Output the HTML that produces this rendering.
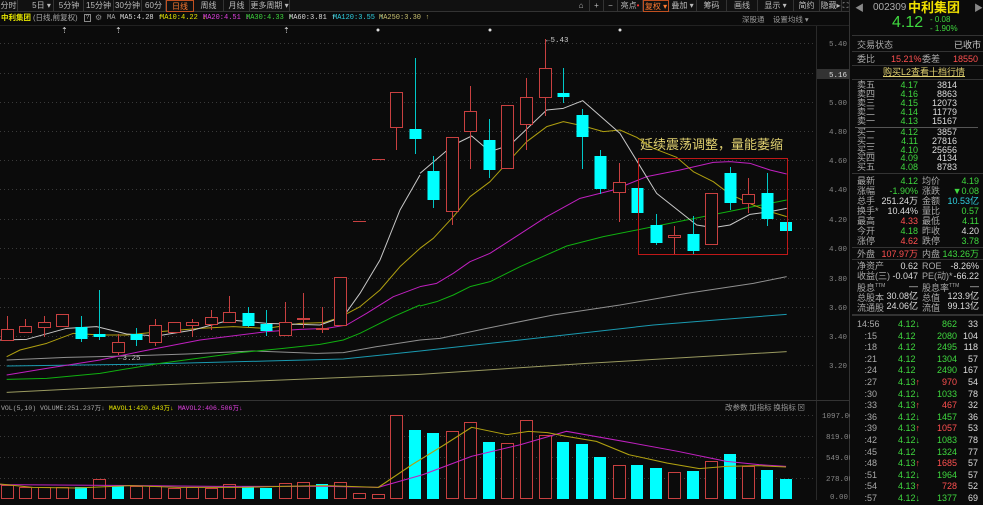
<!DOCTYPE html>
<html><head><meta charset="utf-8"><style>
*{margin:0;padding:0;box-sizing:border-box}
body{width:983px;height:500px;background:#0b0b0b;overflow:hidden;position:relative;font-family:"Liberation Sans","Noto Sans CJK SC",sans-serif;font-size:9px;color:#c8c8c8}
.a{position:absolute;white-space:nowrap;line-height:10px}
.tb{position:absolute;top:0;height:12px;line-height:12px;text-align:center;color:#bbb;border-right:1px solid #333;font-size:8px;overflow:hidden}
.r{text-align:right}
.g{color:#3fd83f}.rd{color:#ff5050}.y{color:#e6e600}.cy{color:#2fd0e0}.w{color:#ddd}
.ma{position:absolute;top:14px;font-family:"Liberation Mono",monospace;font-size:7px;line-height:9px;white-space:nowrap}
</style></head><body>
<!-- top toolbar -->
<div class="a" style="left:0;top:0;width:850px;height:12px;background:#111;border-bottom:1px solid #333"></div>
<div class="tb" style="left:0;width:18px">分时</div>
<div class="tb" style="left:30px;width:24px">5日 ▾</div>
<div class="tb" style="left:55px;width:29px">5分钟</div>
<div class="tb" style="left:84px;width:30px">15分钟</div>
<div class="tb" style="left:114px;width:28px">30分钟</div>
<div class="tb" style="left:142px;width:24px">60分钟</div>
<div class="tb" style="left:166px;width:28px;color:#ff7a30;border:1px solid #c05020">日线</div>
<div class="tb" style="left:194px;width:30px">周线</div>
<div class="tb" style="left:224px;width:26px">月线</div>
<div class="tb" style="left:250px;width:40px">更多周期 ▾</div>
<div class="tb" style="left:573px;width:17px">⌂</div>
<div class="tb" style="left:590px;width:14px">+</div>
<div class="tb" style="left:604px;width:14px">−</div>
<div class="tb" style="left:618px;width:25px">亮点<span style="color:#f33">•</span></div>
<div class="tb" style="left:643px;width:26px;color:#ff7a30;border:1px solid #c05020">复权 ▾</div>
<div class="tb" style="left:669px;width:28px">叠加 ▾</div>
<div class="tb" style="left:697px;width:30px">筹码</div>
<div class="tb" style="left:727px;width:31px">画线</div>
<div class="tb" style="left:758px;width:36px">显示 ▾</div>
<div class="tb" style="left:794px;width:26px">简约</div>
<div class="tb" style="left:820px;width:22px">隐藏▸</div>
<div class="tb" style="left:842px;width:8px">⛶</div>
<!-- title row -->
<div class="a" style="left:1px;top:13px;font-size:7.5px;color:#e6e600;font-weight:bold">中利集团</div>
<div class="a" style="left:33px;top:13px;font-size:7.5px;color:#aaa">(日线,前复权)</div>
<div class="a" style="left:84px;top:14px;width:7px;height:8px;border:1px solid #888;font-size:6px;line-height:6px;text-align:center;color:#aaa">?</div>
<div class="a" style="left:95px;top:13px;font-size:8px;color:#888">⚙</div>
<div class="ma" style="left:107px;color:#aaa">MA</div>
<div class="ma w" style="left:120px">MA5:4.28 ↑</div>
<div class="ma y" style="left:160px">MA10:4.22 ↓</div>
<div class="ma" style="left:203px;color:#e040e0">MA20:4.51 ↓</div>
<div class="ma g" style="left:246px">MA30:4.33 ↑</div>
<div class="ma w" style="left:289px">MA60:3.81 ↑</div>
<div class="ma cy" style="left:333px">MA120:3.55 ↑</div>
<div class="ma" style="left:379px;color:#c8c070">MA250:3.30 ↑</div>
<div class="a" style="left:742px;top:15px;color:#999;font-size:7.5px">深股通 &nbsp;&nbsp; 设置均线 ▾</div>
<div class="a" style="left:0;top:25px;width:850px;height:1px;background:#222"></div>
<!-- chart -->
<svg class="a" style="left:0;top:0" width="850" height="500">
<g stroke="#3a3a3a" stroke-dasharray="1,3" stroke-width="1">
<line x1="0" x2="816" y1="43.5" y2="43.5"/><line x1="0" x2="816" y1="73.5" y2="73.5"/><line x1="0" x2="816" y1="102.5" y2="102.5"/><line x1="0" x2="816" y1="131.5" y2="131.5"/><line x1="0" x2="816" y1="160.5" y2="160.5"/><line x1="0" x2="816" y1="189.5" y2="189.5"/><line x1="0" x2="816" y1="219.5" y2="219.5"/><line x1="0" x2="816" y1="248.5" y2="248.5"/><line x1="0" x2="816" y1="278.5" y2="278.5"/><line x1="0" x2="816" y1="307.5" y2="307.5"/><line x1="0" x2="816" y1="336.5" y2="336.5"/><line x1="0" x2="816" y1="365.5" y2="365.5"/>
<line x1="0" x2="816" y1="415.5" y2="415.5"/><line x1="0" x2="816" y1="436.5" y2="436.5"/><line x1="0" x2="816" y1="457.5" y2="457.5"/><line x1="0" x2="816" y1="478.5" y2="478.5"/>
</g>
<line x1="816.5" y1="26" x2="816.5" y2="500" stroke="#2a2a2a"/>
<line x1="0" y1="400.5" x2="850" y2="400.5" stroke="#333"/>
<line x1="849.5" y1="0" x2="849.5" y2="500" stroke="#333"/>
<g fill="#ddd" font-size="8" font-family="Liberation Sans">
<text x="61" y="33">⇡</text><text x="115" y="33">⇡</text><text x="283" y="33">⇡</text><circle cx="378" cy="30" r="1.5"/><circle cx="490" cy="30" r="1.5"/><circle cx="620" cy="30" r="1.5"/>
</g>
<g fill="#888" font-size="7.5" font-family="Liberation Mono">
<text x="829" y="46">5.40</text><text x="829" y="105">5.00</text><text x="829" y="134">4.80</text><text x="829" y="163">4.60</text><text x="829" y="192">4.40</text><text x="829" y="222">4.20</text><text x="829" y="251">4.00</text><text x="829" y="281">3.80</text><text x="829" y="310">3.60</text><text x="829" y="339">3.40</text><text x="829" y="368">3.20</text>
<text x="822" y="418">1097.00</text><text x="826" y="439">819.00</text><text x="826" y="460">549.00</text><text x="826" y="481">278.00</text><text x="830" y="499">0.00</text>
</g>
<rect x="817" y="69" width="32" height="10" fill="#333"/><text x="829" y="77" fill="#ddd" font-size="7.5" font-family="Liberation Mono">5.16</text>
<text x="546" y="42" fill="#ccc" font-size="7.5" font-family="Liberation Mono">←5.43</text>
<text x="118" y="360" fill="#ccc" font-size="7.5" font-family="Liberation Mono">←3.25</text>
<g fill="none" stroke-width="3" stroke-linejoin="round">
<g transform="translate(0,30) scale(0.33333)">
<polyline stroke="#9a9a60" points="20,1087 400,1068 800,1052 1260,1033"/>
<polyline stroke="#1a9ab0" points="20,1008 400,1003 800,993 1030,987 1260,963"/>
<polyline stroke="#909090" points="20,990 200,982 380,978 560,972 760,963 950,970 1030,968 1130,950 1260,930"/>
<polyline stroke="#10b010" points="20,1048 140,1045 300,1030 480,1000 720,968 850,955 960,943 1030,930 1080,910 1180,860 1260,825"/>
<polyline stroke="#c020c0" points="20,1035 140,1015 300,990 420,965 600,930 800,905 900,898 980,895 1040,885 1100,850 1180,800 1260,770"/>
<polyline stroke="#b0a010" points="20,980 60,960 140,940 220,910 300,915 380,915 480,905 600,895 700,890 800,895 900,880 970,878 1020,862 1080,830 1140,780 1200,710 1260,655"/>
<polyline stroke="#c8c8c8" points="0,930 80,928 200,895 290,890 380,912 470,918 580,900 690,870 800,880 960,885 1030,860 1080,790 1140,690 1200,540 1260,435"/>
</g>
<g transform="translate(420,30) scale(0.33333)">
<polyline stroke="#9a9a60" points="0,1033 500,1000 1100,965"/>
<polyline stroke="#1a9ab0" points="0,963 300,930 700,885 1100,853"/>
<polyline stroke="#909090" points="0,930 60,925 200,895 400,855 600,825 800,790 1000,760 1100,740"/>
<polyline stroke="#10b010" points="0,828 50,815 100,795 150,770 210,755 300,710 440,648 550,620 700,590 850,560 1000,530 1100,510"/>
<polyline stroke="#c020c0" points="0,770 50,760 100,730 150,695 210,670 280,625 380,560 480,505 580,480 680,440 780,420 880,397 930,395 990,400 1050,420 1100,432"/>
<polyline stroke="#b0a010" points="0,655 40,625 100,560 150,500 210,455 260,400 320,335 380,290 430,275 490,288 550,305 600,300 650,322 700,355 770,382 820,425 880,455 930,493 1000,525 1050,545 1100,560"/>
<polyline stroke="#c8c8c8" points="0,430 100,345 155,318 210,365 270,345 380,240 430,235 488,212 600,310 710,490 830,585 880,593 930,585 990,553 1050,545 1100,535"/>
</g>
</g>
<g stroke="#c84040" fill="#0b0b0b" stroke-width="1">
<line x1="7.5" y1="316" x2="7.5" y2="341"/><rect x="1.5" y="329.5" width="12" height="11"/>
<line x1="25.5" y1="319" x2="25.5" y2="333"/><rect x="19.5" y="326.5" width="12" height="6"/>
<line x1="44.5" y1="316" x2="44.5" y2="337"/><rect x="38.5" y="322.5" width="12" height="5"/>
<rect x="56.5" y="314.5" width="12" height="12"/>
<line x1="118.5" y1="334" x2="118.5" y2="355"/><rect x="112.5" y="342.5" width="12" height="10"/>
<line x1="155.5" y1="319" x2="155.5" y2="346"/><rect x="149.5" y="325.5" width="12" height="17"/>
<rect x="168.5" y="322.5" width="12" height="10"/>
<line x1="192.5" y1="319" x2="192.5" y2="337"/><rect x="186.5" y="322.5" width="12" height="3"/>
<line x1="211.5" y1="310" x2="211.5" y2="330"/><rect x="205.5" y="317.5" width="12" height="7"/>
<line x1="229.5" y1="296" x2="229.5" y2="322"/><rect x="223.5" y="312.5" width="12" height="10"/>
<line x1="285.5" y1="302" x2="285.5" y2="335"/><rect x="279.5" y="322.5" width="12" height="13"/>
<line x1="303.5" y1="293" x2="303.5" y2="328"/><rect x="297.5" y="318.5" width="12" height="1"/>
<line x1="322.5" y1="307" x2="322.5" y2="333"/><rect x="316.5" y="328.5" width="12" height="1"/>
<rect x="334.5" y="277.5" width="12" height="48"/>
<line x1="353" y1="221.5" x2="366" y2="221.5"/>
<line x1="372" y1="159.5" x2="385" y2="159.5"/>
<line x1="396.5" y1="127" x2="396.5" y2="150"/><rect x="390.5" y="92.5" width="12" height="35"/>
<line x1="452.5" y1="137" x2="452.5" y2="225"/><rect x="446.5" y="137.5" width="12" height="74"/>
<line x1="470.5" y1="86" x2="470.5" y2="169"/><rect x="464.5" y="111.5" width="12" height="20"/>
<rect x="501.5" y="105.5" width="12" height="63"/>
<line x1="526.5" y1="78" x2="526.5" y2="150"/><rect x="520.5" y="97.5" width="12" height="27"/>
<line x1="545.5" y1="39" x2="545.5" y2="116"/><rect x="539.5" y="68.5" width="12" height="29"/>
<line x1="619.5" y1="163" x2="619.5" y2="222"/><rect x="613.5" y="182.5" width="12" height="10"/>
<line x1="674.5" y1="226" x2="674.5" y2="254"/><rect x="668.5" y="235.5" width="12" height="2"/>
<rect x="705.5" y="193.5" width="12" height="51"/>
<line x1="748.5" y1="178" x2="748.5" y2="213"/><rect x="742.5" y="194.5" width="12" height="9"/>
</g>
<g stroke="#00c8c8" fill="#00ffff" stroke-width="1">
<line x1="81.5" y1="316" x2="81.5" y2="342"/><rect x="75.5" y="327" width="12" height="12" stroke="none"/>
<line x1="99.5" y1="290" x2="99.5" y2="340"/><rect x="93.5" y="334" width="12" height="3" stroke="none"/>
<line x1="136.5" y1="328" x2="136.5" y2="346"/><rect x="130.5" y="334" width="12" height="6" stroke="none"/>
<line x1="248.5" y1="307" x2="248.5" y2="327"/><rect x="242.5" y="313" width="12" height="13" stroke="none"/>
<line x1="266.5" y1="310" x2="266.5" y2="336"/><rect x="260.5" y="324" width="12" height="7" stroke="none"/>
<line x1="415.5" y1="58" x2="415.5" y2="154"/><rect x="409.5" y="129" width="12" height="10" stroke="none"/>
<line x1="433.5" y1="156" x2="433.5" y2="208"/><rect x="427.5" y="171" width="12" height="29" stroke="none"/>
<line x1="489.5" y1="119" x2="489.5" y2="178"/><rect x="483.5" y="140" width="12" height="30" stroke="none"/>
<line x1="563.5" y1="68" x2="563.5" y2="103"/><rect x="557.5" y="93" width="12" height="4" stroke="none"/>
<line x1="582.5" y1="109" x2="582.5" y2="169"/><rect x="576.5" y="115" width="12" height="22" stroke="none"/>
<line x1="600.5" y1="150" x2="600.5" y2="194"/><rect x="594.5" y="156" width="12" height="33" stroke="none"/>
<rect x="631.5" y="188" width="12" height="25" stroke="none"/>
<line x1="656.5" y1="214" x2="656.5" y2="245"/><rect x="650.5" y="225" width="12" height="18" stroke="none"/>
<line x1="693.5" y1="216" x2="693.5" y2="254"/><rect x="687.5" y="234" width="12" height="17" stroke="none"/>
<line x1="730.5" y1="167" x2="730.5" y2="210"/><rect x="724.5" y="173" width="12" height="30" stroke="none"/>
<line x1="767.5" y1="173" x2="767.5" y2="226"/><rect x="761.5" y="193" width="12" height="26" stroke="none"/>
<rect x="780" y="222" width="12" height="9" stroke="none"/>
</g>
<rect x="638.5" y="158.5" width="149" height="96" fill="none" stroke="#c01818"/>
<text x="640" y="149" fill="#e0d070" font-size="13" font-family="Noto Sans CJK SC,sans-serif">延续震荡调整，量能萎缩</text>
<text x="1" y="410" font-size="6.5" font-family="Liberation Mono" fill="#aaa">VOL(5,10) VOLUME:251.237万↓ <tspan fill="#e6e600">MAVOL1:420.643万↓</tspan> <tspan fill="#e040e0">MAVOL2:406.506万↓</tspan></text>
<text x="725" y="410" font-size="7.5" fill="#999" font-family="Noto Sans CJK SC,sans-serif">改参数 加指标 换指标 ⊠</text>
<g stroke="#c84040" fill="#0b0b0b">
<rect x="1.5" y="485.5" width="12" height="13"/><rect x="19.5" y="487.5" width="12" height="11"/><rect x="38.5" y="487.5" width="12" height="11"/><rect x="56.5" y="487.5" width="12" height="11"/>
<rect x="93.5" y="479.5" width="12" height="19"/><rect x="130.5" y="486.5" width="12" height="12"/><rect x="149.5" y="486.5" width="12" height="12"/><rect x="168.5" y="488.5" width="12" height="10"/><rect x="186.5" y="487.5" width="12" height="11"/><rect x="205.5" y="488.5" width="12" height="10"/><rect x="223.5" y="484.5" width="12" height="14"/>
<rect x="279.5" y="483.5" width="12" height="15"/><rect x="297.5" y="482.5" width="12" height="16"/><rect x="334.5" y="482.5" width="12" height="16"/><rect x="353.5" y="493.5" width="12" height="5"/><rect x="372.5" y="494.5" width="12" height="4"/>
<rect x="390.5" y="415.5" width="12" height="83"/><rect x="446.5" y="431.5" width="12" height="67"/><rect x="464.5" y="422.5" width="12" height="76"/><rect x="501.5" y="443.5" width="12" height="55"/><rect x="520.5" y="420.5" width="12" height="78"/><rect x="539.5" y="435.5" width="12" height="63"/>
<rect x="613.5" y="465.5" width="12" height="33"/><rect x="668.5" y="472.5" width="12" height="26"/><rect x="705.5" y="461.5" width="12" height="37"/><rect x="742.5" y="466.5" width="12" height="32"/>
</g>
<g fill="#00ffff">
<rect x="75" y="487" width="12" height="12"/><rect x="112" y="486" width="12" height="13"/><rect x="242" y="486" width="12" height="13"/><rect x="260" y="488" width="12" height="11"/><rect x="316" y="484" width="12" height="15"/>
<rect x="409" y="430" width="12" height="69"/><rect x="427" y="433" width="12" height="66"/><rect x="483" y="442" width="12" height="57"/><rect x="557" y="442" width="12" height="57"/><rect x="576" y="444" width="12" height="55"/><rect x="594" y="457" width="12" height="42"/><rect x="631" y="465" width="12" height="34"/><rect x="650" y="468" width="12" height="31"/><rect x="687" y="471" width="12" height="28"/><rect x="724" y="454" width="12" height="45"/><rect x="761" y="470" width="12" height="29"/><rect x="780" y="479" width="12" height="20"/>
</g>
<g fill="none" stroke-width="3" transform="translate(0,398) scale(0.5421,0.33333)">
<polyline stroke="#c020c0" points="0,260 200,262 400,265 600,265 698,268 780,230 870,175 960,140 1045,100 1150,130 1250,160 1340,190 1400,200 1450,205"/>
<polyline stroke="#b0a010" points="0,258 60,268 140,270 240,263 330,268 450,268 520,265 600,263 698,268 760,200 820,140 870,88 935,110 975,100 1010,104 1045,115 1100,130 1160,170 1230,195 1290,212 1340,205 1400,203 1450,207"/>
</g>
</svg>
<!-- right panel -->
<div class="a" style="left:850px;top:0;width:133px;height:500px;background:#0b0b0b"></div>
<div class="a" style="left:855px;top:3px;color:#888;font-size:9px">◀</div>
<div class="a" style="left:873px;top:2px;color:#aaa;font-size:10px;line-height:12px">002309</div>
<div class="a" style="left:908px;top:0px;color:#f0e000;font-size:13px;font-weight:bold;line-height:15px">中利集团</div>
<div class="a" style="left:974px;top:3px;color:#888">▶</div>
<div class="a g" style="left:892px;top:15px;font-size:16px;line-height:16px">4.12</div>
<div class="a g" style="left:930px;top:15px;font-size:8px;line-height:9px">- 0.08<br>- 1.90%</div>
<div class="a" style="left:852px;top:35px;width:131px;height:1px;background:#333"></div>
<div class="a" style="left:857px;top:40px;color:#aaa">交易状态</div><div class="a" style="left:954px;top:40px;color:#ccc">已收市</div>
<div class="a" style="left:852px;top:51px;width:131px;height:1px;background:#333"></div>
<div class="a" style="left:857px;top:54px;color:#aaa">委比</div><div class="a rd" style="left:891px;top:54px">15.21%</div><div class="a" style="left:922px;top:54px;color:#aaa">委差</div><div class="a rd r" style="left:940px;top:54px;width:38px">18550</div>
<div class="a" style="left:852px;top:65px;width:131px;height:1px;background:#333"></div>
<div class="a" style="left:883px;top:67px;color:#e0d070;text-decoration:underline">购买L2查看十档行情</div>
<div class="a" style="left:852px;top:79px;width:131px;height:1px;background:#333"></div>
<div class="a" style="left:857px;top:81px;line-height:9px;color:#aaa">卖五<br>卖四<br>卖三<br>卖二<br>卖一</div>
<div class="a g r" style="left:880px;top:81px;width:38px;line-height:9px">4.17<br>4.16<br>4.15<br>4.14<br>4.13</div>
<div class="a w r" style="left:930px;top:81px;width:27px;line-height:9px">3814<br>8863<br>12073<br>11779<br>15167</div>
<div class="a" style="left:855px;top:127px;width:123px;height:1px;background:#555"></div>
<div class="a" style="left:857px;top:128px;line-height:8.8px;color:#aaa">买一<br>买二<br>买三<br>买四<br>买五</div>
<div class="a g r" style="left:880px;top:128px;width:38px;line-height:8.8px">4.12<br>4.11<br>4.10<br>4.09<br>4.08</div>
<div class="a w r" style="left:930px;top:128px;width:27px;line-height:8.8px">3857<br>27816<br>25656<br>4134<br>8783</div>
<div class="a" style="left:852px;top:173px;width:131px;height:1px;background:#333"></div>
<div class="a" style="left:857px;top:176px;line-height:10px;color:#aaa">最新<br>涨幅<br>总手<br>换手*<br>最高<br>今开<br>涨停</div>
<div class="a r" style="left:868px;top:176px;width:50px;line-height:10px"><span class="g">4.12</span><br><span class="g">-1.90%</span><br><span class="w">251.24万</span><br><span class="w">10.44%</span><br><span class="rd">4.33</span><br><span class="g">4.18</span><br><span class="rd">4.62</span></div>
<div class="a" style="left:922px;top:176px;line-height:10px;color:#aaa">均价<br>涨跌<br>金额<br>量比<br>最低<br>昨收<br>跌停</div>
<div class="a r" style="left:938px;top:176px;width:41px;line-height:10px"><span class="g">4.19</span><br><span class="g">▼0.08</span><br><span class="cy">10.53亿</span><br><span class="g">0.57</span><br><span class="g">4.11</span><br><span class="w">4.20</span><br><span class="g">3.78</span></div>
<div class="a" style="left:852px;top:247px;width:131px;height:1px;background:#333"></div>
<div class="a" style="left:857px;top:249px;color:#aaa">外盘</div><div class="a rd r" style="left:868px;top:249px;width:50px">107.97万</div><div class="a" style="left:922px;top:249px;color:#aaa">内盘</div><div class="a g r" style="left:938px;top:249px;width:41px">143.26万</div>
<div class="a" style="left:852px;top:259px;width:131px;height:1px;background:#333"></div>
<div class="a" style="left:857px;top:261px;line-height:10px;color:#aaa">净资产<br>收益(三)<br>股息<sup style="font-size:5px">TTM</sup><br>总股本<br>流通股</div>
<div class="a w r" style="left:868px;top:261px;width:50px;line-height:10px">0.62<br>-0.047<br>—<br>30.08亿<br>24.06亿</div>
<div class="a" style="left:922px;top:261px;line-height:10px;color:#aaa">ROE<br>PE(动)*<br>股息率<sup style="font-size:5px">TTM</sup><br>总值<br>流值</div>
<div class="a w r" style="left:938px;top:261px;width:41px;line-height:10px">-8.26%<br>-66.22<br>—<br>123.9亿<br>99.13亿</div>
<div class="a" style="left:852px;top:314px;width:131px;height:2px;background:#333"></div>
<div class="a" style="left:857px;top:319px;line-height:11.6px;color:#aaa">14:56<br>&nbsp;&nbsp;&nbsp;:15<br>&nbsp;&nbsp;&nbsp;:18<br>&nbsp;&nbsp;&nbsp;:21<br>&nbsp;&nbsp;&nbsp;:24<br>&nbsp;&nbsp;&nbsp;:27<br>&nbsp;&nbsp;&nbsp;:30<br>&nbsp;&nbsp;&nbsp;:33<br>&nbsp;&nbsp;&nbsp;:36<br>&nbsp;&nbsp;&nbsp;:39<br>&nbsp;&nbsp;&nbsp;:42<br>&nbsp;&nbsp;&nbsp;:45<br>&nbsp;&nbsp;&nbsp;:48<br>&nbsp;&nbsp;&nbsp;:51<br>&nbsp;&nbsp;&nbsp;:54<br>&nbsp;&nbsp;&nbsp;:57</div>
<div class="a g" style="left:898px;top:319px;line-height:11.6px">4.12↓<br>4.12<br>4.12<br>4.12<br>4.12<br>4.13<span class="rd">↑</span><br>4.12↓<br>4.13<span class="rd">↑</span><br>4.12↓<br>4.13<span class="rd">↑</span><br>4.12↓<br>4.12<br>4.13<span class="rd">↑</span><br>4.12↓<br>4.13<span class="rd">↑</span><br>4.12↓</div>
<div class="a r" style="left:925px;top:319px;width:32px;line-height:11.6px"><span class="g">862</span><br><span class="g">2080</span><br><span class="g">2495</span><br><span class="g">1304</span><br><span class="g">2490</span><br><span class="rd">970</span><br><span class="g">1033</span><br><span class="rd">467</span><br><span class="g">1457</span><br><span class="rd">1057</span><br><span class="g">1083</span><br><span class="g">1324</span><br><span class="rd">1685</span><br><span class="g">1964</span><br><span class="rd">728</span><br><span class="g">1377</span></div>
<div class="a w r" style="left:958px;top:319px;width:20px;line-height:11.6px">33<br>104<br>118<br>57<br>167<br>54<br>78<br>32<br>36<br>53<br>78<br>77<br>57<br>57<br>52<br>69</div>
</body></html>
